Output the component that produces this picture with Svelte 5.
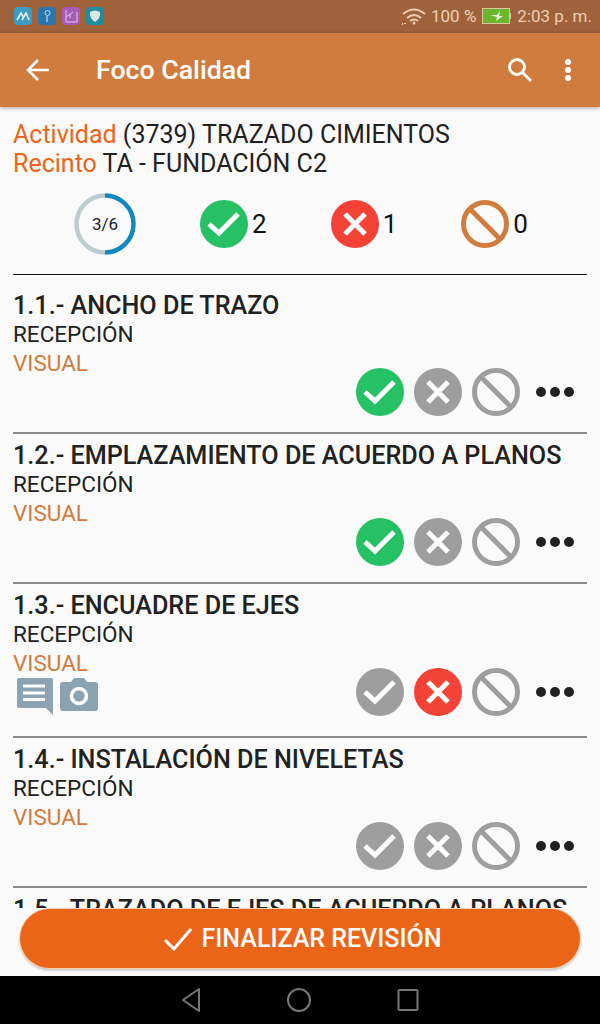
<script>
  const items = [
    { code: '1.1.-', name: 'ANCHO DE TRAZO', state: 'ok' },
    { code: '1.2.-', name: 'EMPLAZAMIENTO DE ACUERDO A PLANOS', state: 'ok' },
    { code: '1.3.-', name: 'ENCUADRE DE EJES', state: 'bad', notes: true },
    { code: '1.4.-', name: 'INSTALACIÓN DE NIVELETAS', state: '' },
    { code: '1.5.-', name: 'TRAZADO DE EJES DE ACUERDO A PLANOS', state: '' }
  ]
</script>

<div class="phone">
  <div class="status">
    <div class="apps">
      <svg width="18" height="18" viewBox="0 0 18 18"><rect width="18" height="18" rx="4" fill="#3a9cc0"/><path d="M3 13l4-7 3 5M8 13l4-7 3 7" fill="none" stroke="#e6f4f8" stroke-width="1.6"/></svg>
      <svg width="18" height="18" viewBox="0 0 18 18"><rect width="18" height="18" rx="4" fill="#2a76ac"/><circle cx="9.500" cy="6" r="2.500" fill="none" stroke="#bfe0ee" stroke-width="1"/><path d="M9 9v6" stroke="#bfe0ee" stroke-width="1.200"/></svg>
      <svg width="18" height="18" viewBox="0 0 18 18"><rect width="18" height="18" rx="4" fill="#a55bb8"/><path d="M4 3v12h11V5M4 10l7-5M8 7v4" fill="none" stroke="#e4c8ea" stroke-width="1"/></svg>
      <svg width="18" height="18" viewBox="0 0 18 18"><rect width="18" height="18" rx="4" fill="#1e8c9c"/><path d="M4 5q5-3 10 0q1 6-5 10q-6-4-5-10z" fill="#d9e6e6"/></svg>
    </div>
    <div class="sys">
      <svg class="wifi" width="26" height="18" viewBox="0 0 26 18" fill="none" stroke="#edcfb6" stroke-width="1.800">
        <path d="M3 7q11-9 22 0M7 11q7-6 14 0M10 14q4-3 8 0"/>
        <circle cx="14" cy="16" r="1.500" fill="#edcfb6" stroke="none"/>
        <path d="M2 17h1M5 16v1" stroke-width="2"/>
      </svg>
      <span>100 %</span>
      <svg class="battery" width="29" height="16" viewBox="0 0 29 16"><rect x=".5" y=".5" width="27" height="15" fill="#6cb52e" stroke="#d9c8a0"/><rect x="28" y="5" width="1" height="6" fill="#d9c8a0"/><path d="M8 7l7 0 3-4-1 5 4 0-7 5 1-4-7-2z" fill="#e8f2d8"/></svg>
      <span>2:03 p. m.</span>
    </div>
  </div>

  <header class="toolbar">
    <svg class="back" width="26" height="26" viewBox="0 0 26 26" fill="none" stroke="#fff" stroke-width="2.600"><path d="M24 13H3M13 3L3 13l10 10"/></svg>
    <h1>Foco Calidad</h1>
    <svg class="search" width="28" height="28" viewBox="0 0 28 28" fill="none" stroke="#fff" stroke-width="2.800"><circle cx="11" cy="11" r="7.500"/><path d="M16.500 16.500L25 25"/></svg>
    <svg class="more" width="8" height="24" viewBox="0 0 8 24" fill="#fff"><circle cx="4" cy="4" r="3"/><circle cx="4" cy="12" r="3"/><circle cx="4" cy="20" r="3"/></svg>
  </header>

  <main class="content">
    <div class="info">
      <div><span class="label">Actividad</span> (3739) TRAZADO CIMIENTOS</div>
      <div><span class="label">Recinto</span> TA - FUNDACIÓN C2</div>
    </div>

    <div class="summary">
      <div class="ring">
        <svg width="62" height="62" viewBox="0 0 62 62" fill="none" stroke-width="4.500">
          <path d="M31 2.500a28.500 28.500 0 0 0 0 57" stroke="#bfcbcf"/>
          <path d="M31 2.500a28.500 28.500 0 0 1 0 57" stroke="#1288c0"/>
        </svg>
        <span>3/6</span>
      </div>
      <div class="count">
        {@render okIcon('#27c165')}
        <span>2</span>
      </div>
      <div class="count">
        {@render badIcon('#f44336')}
        <span>1</span>
      </div>
      <div class="count">
        {@render naIcon('#cf7c3e')}
        <span>0</span>
      </div>
    </div>

    {#each items as item}
      <section class="item">
        <h2>{item.code} {item.name}</h2>
        <div class="kind">RECEPCIÓN</div>
        <div class="visual">VISUAL</div>
        <div class="row">
          <div class="notes">
            {#if item.notes}
              <svg width="38" height="37" viewBox="0 0 38 37"><path d="M3 0h32a2 2 0 0 1 2 2v35l-7-7H3a2 2 0 0 1-2-2V2a2 2 0 0 1 2-2z" fill="#8aa2b2"/><path d="M7 8h22M7 15h22M7 21.500h22" stroke="#fff" stroke-width="3"/></svg>
              <svg width="38" height="33" viewBox="0 0 38 33"><path d="M3 4h8l3-4h10l3 4h8a3 3 0 0 1 3 3v23a3 3 0 0 1-3 3H3a3 3 0 0 1-3-3V7a3 3 0 0 1 3-3z" fill="#8aa2b2"/><circle cx="19" cy="18" r="7.500" fill="none" stroke="#fff" stroke-width="3.500"/></svg>
            {/if}
          </div>
          <div class="actions">
            {@render okIcon(item.state === 'ok' ? '#27c165' : '#9e9e9e')}
            {@render badIcon(item.state === 'bad' ? '#f44336' : '#9e9e9e')}
            {@render naIcon('#9e9e9e')}
            <div class="dots"><i></i><i></i><i></i></div>
          </div>
        </div>
      </section>
    {/each}
  </main>

  <div class="footer">
    <button>
      <svg width="30" height="26" viewBox="0 0 30 26" fill="none" stroke="#fff" stroke-width="3"><path d="M2 14l9 9L28 3"/></svg>
      FINALIZAR REVISIÓN
    </button>
  </div>

  <nav class="navbar">
    <svg width="20" height="26" viewBox="0 0 20 26" fill="none" stroke="#777" stroke-width="2" stroke-linejoin="round"><path d="M18 2v22L2 13z"/></svg>
    <svg width="24" height="26" viewBox="0 0 24 26" fill="none" stroke="#777" stroke-width="2"><circle cx="12" cy="13" r="11"/></svg>
    <svg width="22" height="24" viewBox="0 0 22 24" fill="none" stroke="#777" stroke-width="2" stroke-linejoin="round"><rect x="1.500" y="2" width="19" height="20" rx="1"/></svg>
  </nav>
</div>

{#snippet okIcon(color)}
  <svg class="state" width="48" height="48" viewBox="0 0 48 48"><circle cx="24" cy="24" r="24" fill={color}/><path d="M9 24l10 9L38 14" fill="none" stroke="#fff" stroke-width="5"/></svg>
{/snippet}

{#snippet badIcon(color)}
  <svg class="state" width="48" height="48" viewBox="0 0 48 48"><circle cx="24" cy="24" r="24" fill={color}/><path d="M14 14l20 20M34 14L14 34" fill="none" stroke="#fff" stroke-width="5"/></svg>
{/snippet}

{#snippet naIcon(color)}
  <svg class="state" width="48" height="48" viewBox="0 0 48 48" fill="none" stroke={color} stroke-width="5"><circle cx="24" cy="24" r="21.500"/><path d="M9 9l30 30"/></svg>
{/snippet}

<style>
  :global(body) {
    margin: 0;
    font-family: Roboto, sans-serif;
  }

  .phone {
    width: 600px;
    height: 1024px;
    display: flex;
    flex-direction: column;
    background: #fafafa;
    overflow: hidden;
  }

  .status {
    height: 33px;
    box-sizing: border-box;
    flex-shrink: 0;
    background: #a0623a;
    display: flex;
    align-items: center;
    justify-content: space-between;
    padding: 0 8px 2px 14px;
  }

  .apps {
    display: flex;
    gap: 6px;
  }

  .sys {
    display: flex;
    align-items: center;
    gap: 5px;
    color: #edcfb6;
    font-size: 17px;
  }

  .battery {
    margin: 0 1px;
  }

  .toolbar {
    height: 74px;
    flex-shrink: 0;
    background: #cf7c3e;
    display: flex;
    align-items: center;
    box-shadow: 0 1px 4px rgba(0, 0, 0, 0.35);
    position: relative;
    z-index: 1;
  }

  .back {
    margin-left: 25px;
  }

  .toolbar h1 {
    margin: 0 0 0 45px;
    flex: 1;
    color: #fff;
    font-size: 26.700px;
    font-weight: 500;
  }

  .search {
    margin-right: 30px;
  }

  .more {
    margin-right: 28px;
  }

  .content {
    flex: 1;
    min-height: 0;
    overflow: hidden;
    padding: 13px 13px 0;
    color: #212121;
  }

  .info {
    font-size: 25px;
    line-height: 29px;
  }

  .label {
    color: #ea6518;
  }

  .summary {
    display: flex;
    align-items: center;
    justify-content: center;
    gap: 64px;
    margin-top: 15px;
    padding: 0 0 19px 2px;
    border-bottom: 1px solid #111;
  }

  .ring {
    width: 62px;
    height: 62px;
    position: relative;
    display: flex;
    align-items: center;
    justify-content: center;
    font-size: 17px;
  }

  .ring svg {
    position: absolute;
    left: 0;
    top: 0;
  }

  .count {
    display: flex;
    align-items: center;
    gap: 4px;
    font-size: 26px;
    color: #111;
  }

  .state {
    display: block;
    flex-shrink: 0;
  }

  .item {
    padding-top: 7px;
    border-bottom: 2px solid #8a8a8a;
  }

  .item:first-of-type {
    padding-top: 16px;
  }

  .item h2 {
    margin: 0;
    font-size: 25.200px;
    font-weight: 500;
    line-height: 29px;
    white-space: nowrap;
  }

  .kind {
    font-size: 22.500px;
    line-height: 29px;
  }

  .visual {
    font-size: 22.500px;
    line-height: 29px;
    color: #cf7c3e;
  }

  .row {
    display: flex;
    justify-content: space-between;
    align-items: flex-start;
    margin-top: -10px;
    padding-bottom: 16px;
  }

  .notes {
    display: flex;
    gap: 6px;
    padding: 10px 0 5px 3px;
  }

  .actions {
    display: flex;
    align-items: center;
    gap: 10px;
    padding-right: 13px;
  }

  .dots {
    display: flex;
    gap: 4px;
    margin-left: 6px;
  }

  .dots i {
    width: 10px;
    height: 10px;
    border-radius: 50%;
    background: #212121;
  }

  .footer {
    height: 68px;
    flex-shrink: 0;
    background: #fafafa;
    padding: 1px 20px 0;
    box-sizing: border-box;
  }

  .footer button {
    width: 100%;
    height: 59px;
    border: none;
    border-radius: 30px;
    background: #ea6518;
    color: #fff;
    font-family: Roboto, sans-serif;
    font-size: 25px;
    font-weight: 500;
    display: flex;
    align-items: center;
    justify-content: center;
    gap: 9px;
    box-shadow: 0 0 0 1px #f7d3b5, 0 2px 3px rgba(0, 0, 0, 0.3);
    padding: 0 0 0 4px;
  }

  .navbar {
    height: 48px;
    flex-shrink: 0;
    background: #000;
    display: flex;
    align-items: center;
    justify-content: center;
    gap: 86px;
  }
</style>
